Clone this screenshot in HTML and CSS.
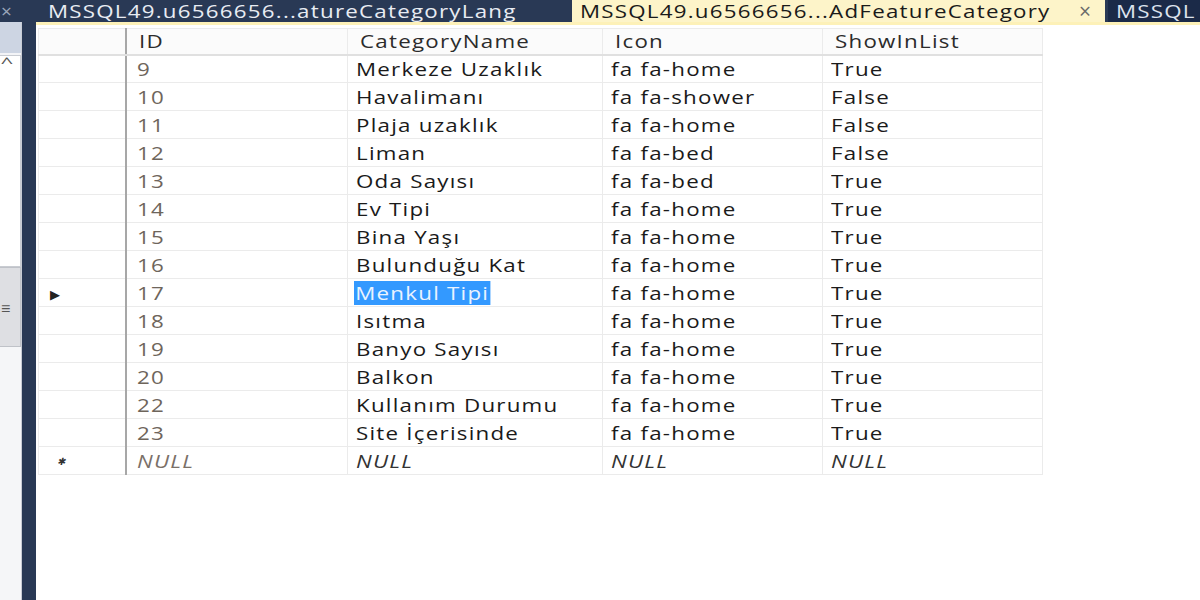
FILE: index.html
```html
<!DOCTYPE html>
<html lang="tr">
	<head>
		<meta charset="UTF-8" />
		<title>AdFeatureCategory</title>
		<link rel="stylesheet" href="styles.css">
	</head>
	<body>
		<div class="tabbar">
			<span class="tab_close_left">×</span>
			<div class="tab"><span class="t">MSSQL49.u6566656...atureCategoryLang</span></div>
			<div class="tab active"><span class="t">MSSQL49.u6566656...AdFeatureCategory</span><span class="x">×</span></div>
			<div class="tab dark"><span class="t">MSSQL</span></div>
		</div>
		<div class="main">
			<div class="side">
				<div class="side_top"></div>
				<div class="side_list"><span class="chev">^</span></div>
				<div class="side_btn">≡</div>
				<div class="side_rest"></div>
			</div>
			<div class="split"></div>
			<div class="content">
				<div class="topline"></div>
				<table class="grid">
					<thead>
						<tr>
							<th class="rh"></th>
							<th class="c_id"><span class="t">ID</span></th>
							<th class="c_name"><span class="t">CategoryName</span></th>
							<th class="c_icon"><span class="t">Icon</span></th>
							<th class="c_show"><span class="t">ShowInList</span></th>
						</tr>
					</thead>
					<tbody id="rows"></tbody>
				</table>
			</div>
		</div>
		<script>
			let data = [
				[9, 'Merkeze Uzaklık', 'fa fa-home', 'True'],
				[10, 'Havalimanı', 'fa fa-shower', 'False'],
				[11, 'Plaja uzaklık', 'fa fa-home', 'False'],
				[12, 'Liman', 'fa fa-bed', 'False'],
				[13, 'Oda Sayısı', 'fa fa-bed', 'True'],
				[14, 'Ev Tipi', 'fa fa-home', 'True'],
				[15, 'Bina Yaşı', 'fa fa-home', 'True'],
				[16, 'Bulunduğu Kat', 'fa fa-home', 'True'],
				[17, 'Menkul Tipi', 'fa fa-home', 'True'],
				[18, 'Isıtma', 'fa fa-home', 'True'],
				[19, 'Banyo Sayısı', 'fa fa-home', 'True'],
				[20, 'Balkon', 'fa fa-home', 'True'],
				[22, 'Kullanım Durumu', 'fa fa-home', 'True'],
				[23, 'Site İçerisinde', 'fa fa-home', 'True'],
			];
			let str = '';
			data.forEach(item => {
				let cur = item[0] == 17;
				str += `<tr>
					<td class="rh">${cur ? '<span class="arrow">▶</span>' : ''}</td>
					<td class="id"><span class="t">${item[0]}</span></td>
					<td><span class="t${cur ? ' sel' : ''}">${item[1]}</span></td>
					<td><span class="t">${item[2]}</span></td>
					<td><span class="t">${item[3]}</span></td>
				</tr>`;
			});
			str += `<tr class="new">
				<td class="rh"><span class="star">✱</span></td>
				<td class="id"><span class="t">NULL</span></td>
				<td><span class="t">NULL</span></td>
				<td><span class="t">NULL</span></td>
				<td><span class="t">NULL</span></td>
			</tr>`;
			document.querySelector('#rows').innerHTML = str;
		</script>
	</body>
</html>
```

FILE: styles.css
```css
* {
	margin: 0;
	padding: 0;
	box-sizing: border-box;
}
body {
	width: 1200px;
	height: 600px;
	overflow: hidden;
	background: #293955;
	font-family: "Open Sans", "Noto Sans", sans-serif;
	font-size: 18px;
	color: #1a1a1a;
}
/* the shot is stretched sideways, so the glyphs are too */
.t {
	display: inline-block;
	letter-spacing: 1px;
	transform: scaleX(1.24);
	transform-origin: left center;
	white-space: nowrap;
}

.tabbar {
	height: 22px;
	display: flex;
	align-items: stretch;
	white-space: nowrap;
	overflow: hidden;
}
.tab_close_left {
	flex: 0 0 36px;
	padding-left: 1px;
	color: #9aa6ba;
	font-size: 19px;
	line-height: 22px;
}
.tab {
	flex: 0 0 auto;
	display: flex;
	align-items: center;
	line-height: 22px;
	color: #e8ecf3;
	overflow: hidden;
}
.tab:nth-child(2) {
	width: 536px;
	padding-left: 12px;
}
.tab.active {
	width: 533px;
	padding: 0 14px 0 8px;
	background: #fdf4c9;
	color: #1a1a1a;
	justify-content: space-between;
}
.tab.active .x {
	color: #6a6a6a;
	font-size: 21px;
	line-height: 22px;
}
.tab.dark {
	flex: 1;
	margin-left: 3px;
	padding-left: 8px;
	background: #1b2a48;
	color: #dde3ee;
}

.main {
	display: flex;
	height: 578px;
}
.side {
	width: 22px;
	display: flex;
	flex-direction: column;
	background: #f3f4f7;
	border-right: 1px solid #c8ccd4;
}
.side_top {
	height: 31px;
	background: #cdd5e3;
}
.side_list {
	height: 212px;
	margin-top: 2px;
	background: #fff;
	border: 1px solid #c9ccd2;
	border-left: none;
	position: relative;
}
.chev {
	position: absolute;
	top: -3px;
	left: 3px;
	color: #555;
	font-size: 14px;
	transform: scaleX(1.6);
}
.side_btn {
	height: 80px;
	background: #dedfe3;
	border: 1px solid #bfc2c8;
	border-left: none;
	color: #555;
	font-size: 16px;
	line-height: 80px;
	padding-left: 1px;
}
.side_rest {
	flex: 1;
	background: #f5f6f8;
}
.split {
	width: 14px;
	background: #293955;
}
.content {
	flex: 1;
	background: #fff;
}
.topline {
	height: 3px;
	margin-bottom: 3px;
	background: #fdf1b8;
}

.grid {
	border-collapse: collapse;
	margin-left: 2px;
	table-layout: fixed;
	width: 1004px;
}
.grid th,
.grid td {
	height: 28px;
	padding: 0 8px;
	line-height: 24px;
	text-align: left;
	font-weight: normal;
	white-space: nowrap;
	border: 1px solid #ebebeb;
}
.grid th {
	height: 26px;
	padding-left: 12px;
	color: #2b2b2b;
	background: #fbfbfb;
	border-bottom: 2px solid #e0e0e0;
}
.grid .rh {
	width: 87px;
	padding-left: 11px;
	border-right: 2px solid #a7a7a7;
	background: #fff;
}
.grid th.rh {
	background: #fbfbfb;
}
.c_id {
	width: 222px;
}
.c_name {
	width: 255px;
}
.c_icon {
	width: 220px;
}
.c_show {
	width: 220px;
}
.grid td.id {
	padding-left: 10px;
	color: #6e655b;
}
.sel {
	background: #3399ff;
	color: #eaf3ff;
	padding: 0 1px;
	margin-left: -2px;
}
.arrow {
	font-size: 13px;
	color: #222;
}
.star {
	display: inline-block;
	padding-left: 7px;
	font-size: 10px;
	vertical-align: 3px;
	color: #333;
}
.new td {
	font-style: italic;
	color: #333;
}
.new td.id {
	color: #7a7068;
}
```
